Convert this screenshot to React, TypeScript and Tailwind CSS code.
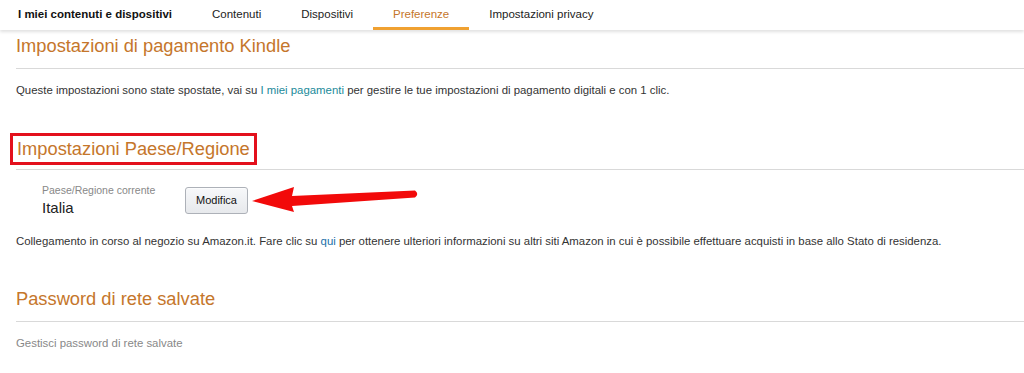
const TABS = ["Contenuti", "Dispositivi", "Preferenze", "Impostazioni privacy"];

function Section({ title, boxed, children }: { title: string; boxed?: boolean; children: React.ReactNode }) {
  return (
    <section>
      <div className="px-4">
        <h2
          className={
            boxed
              ? "-mx-[6px] -mt-[5px] mb-[4px] inline-block border-[3px] border-[#e3101c] px-[4px] py-[2px] text-[18.3px] leading-[22px] text-[#c5762b]"
              : "mb-[11px] text-[18.3px] leading-[22px] text-[#c5762b]"
          }
        >
          {title}
        </h2>
      </div>
      <div className="ml-4 border-t border-[#d9d9d9]" />
      {children}
    </section>
  );
}

export default function App() {
  return (
    <div className="h-[373px] w-[1024px] overflow-hidden bg-white font-['Liberation_Sans',Arial,sans-serif] text-[11.4px] text-[#333]">
      {/* Top nav */}
      <nav className="flex h-[30px] items-stretch shadow-[0_2px_3px_rgba(0,0,0,0.12)]">
        <div className="flex items-center pl-[18px] pr-[20px] text-[11.5px] font-bold text-[#111]">
          I miei contenuti e dispositivi
        </div>
        {TABS.map((t) => (
          <div
            key={t}
            className={
              t === "Preferenze"
                ? "flex items-center border-b-[3px] border-[#f0a131] px-[20px] pt-[3px] text-[11.5px] text-[#c5762b]"
                : "flex items-center px-[20px] text-[11.5px] text-[#222]"
            }
          >
            {t}
          </div>
        ))}
      </nav>

      <div className="pt-[5px]">
        <Section title="Impostazioni di pagamento Kindle">
          <p className="mt-[14px] px-4 leading-[14px]">
            Queste impostazioni sono state spostate, vai su{" "}
            <span className="text-[#1a8a9a]">I miei pagamenti</span> per gestire le tue impostazioni di pagamento
            digitali e con 1 clic.
          </p>
        </Section>

        <div className="mt-[41px]">
          <Section title="Impostazioni Paese/Regione" boxed>
            <div className="relative mt-[14px] flex items-center pl-[42px]">
              <div className="w-[143px]">
                <div className="text-[10.5px] leading-[12px] text-[#888]">Paese/Regione corrente</div>
                <div className="mt-[3px] text-[15px] leading-[17px] text-[#222]">Italia</div>
              </div>
              <button className="h-[27px] rounded-[3px] border border-[#adb1b8] bg-gradient-to-b from-[#f7f8fa] to-[#e7e9ec] px-[10px] text-[11px] text-[#111] shadow-[0_1px_0_rgba(255,255,255,0.6)_inset]">
                Modifica
              </button>
              {/* red annotation arrow */}
              <svg className="absolute left-[248px] top-0" width="176" height="32" viewBox="0 0 176 32">
                <path d="M4 17 L46 3 L44 12 L167 6.5 Q171.5 10 167 13.5 L44 22 L46 28 Z" fill="#f20a0a" />
              </svg>
            </div>
            <p className="mt-[18px] px-4 leading-[14px]">
              Collegamento in corso al negozio su Amazon.it. Fare clic su <span className="text-[#1a6fa8]">qui</span>{" "}
              per ottenere ulteriori informazioni su altri siti Amazon in cui è possibile effettuare acquisti in base
              allo Stato di residenza.
            </p>
          </Section>
        </div>

        <div className="mt-[40px]">
          <Section title="Password di rete salvate">
            <p className="mt-[14px] px-4 leading-[14px] text-[#888]">Gestisci password di rete salvate</p>
          </Section>
        </div>
      </div>
    </div>
  );
}
